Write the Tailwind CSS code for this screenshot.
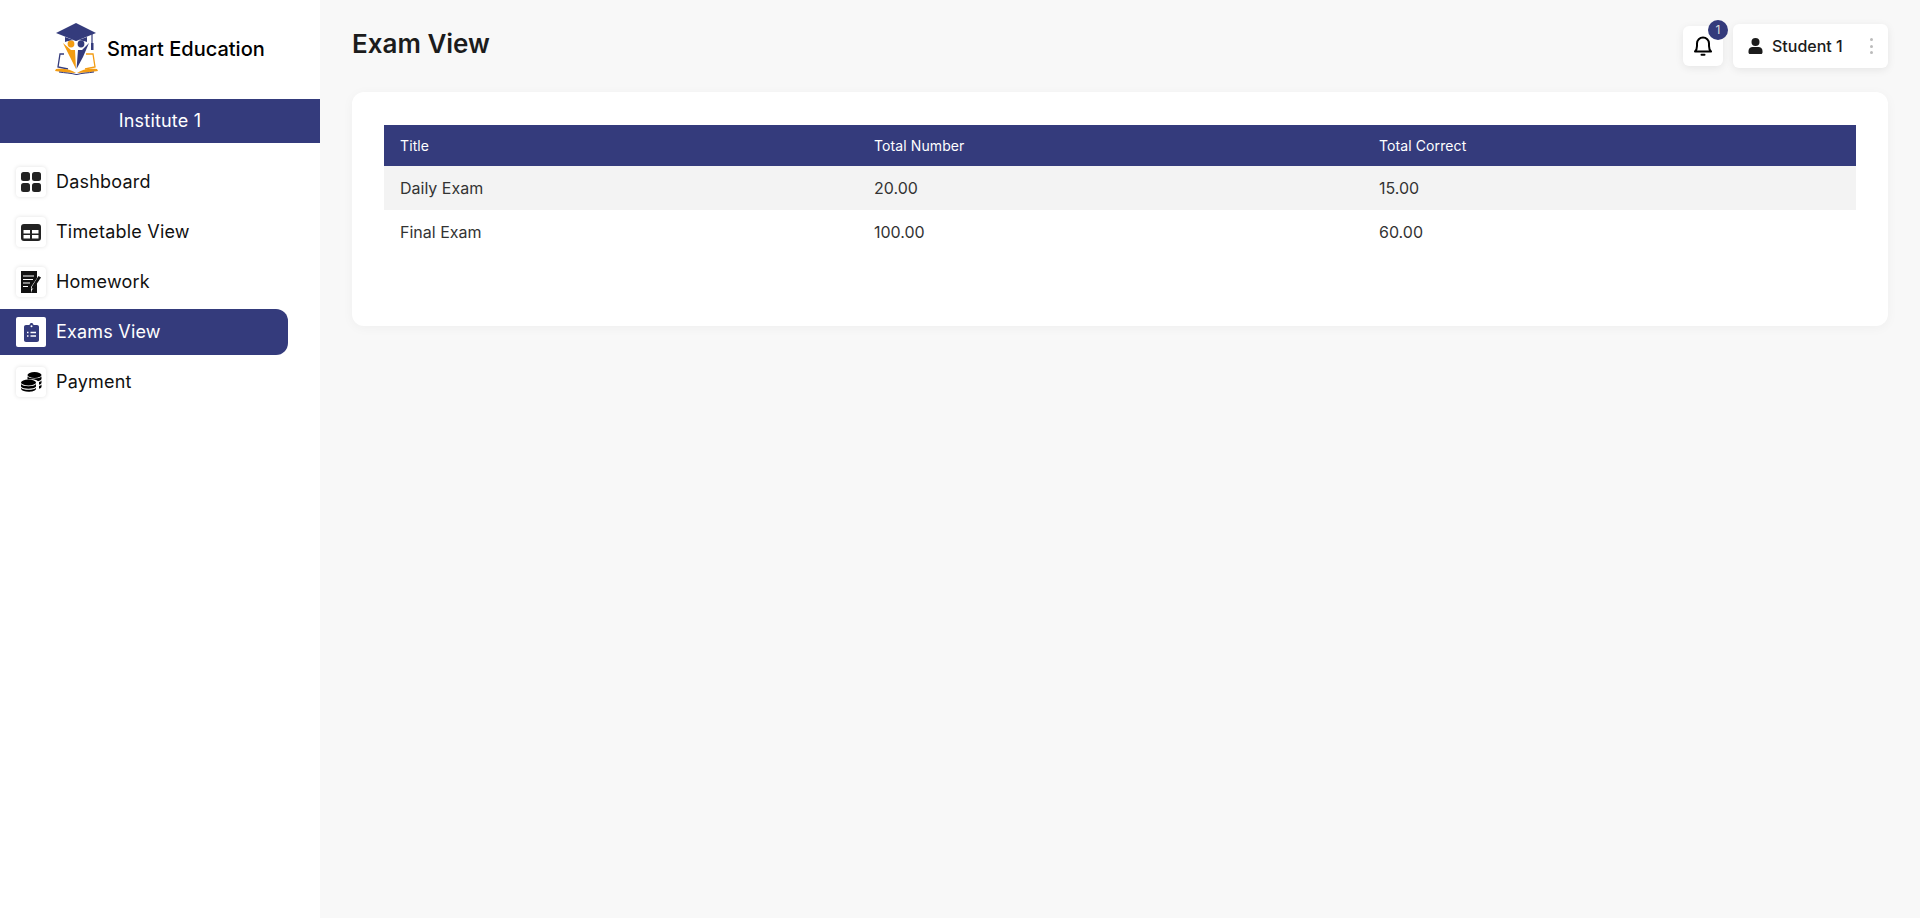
<!DOCTYPE html>
<html lang="en">
<head>
    <meta charset="UTF-8">
    <meta name="viewport" content="width=device-width, initial-scale=1.0">
    <title>Smart Education - Exam View</title>
    <script src="https://cdn.jsdelivr.net/npm/@tailwindcss/browser@4"></script>
</head>
<body class="bg-[#f8f8f8] font-['Inter',sans-serif] h-[918px] overflow-hidden">
    <div class="flex h-[918px]">
        <!-- Sidebar -->
        <aside class="w-[320px] shrink-0 bg-white">
            <div class="h-[99px] flex items-center pl-[55px] gap-[8px] pb-[2px]">
                <svg width="44" height="52" viewBox="0 0 44 52" class="shrink-0">
                    <path d="M21 0L41 10L21 18L1 10Z" fill="#343b7c"/>
                    <path d="M10 14L21 18L32 14V19C27 16.5 15 16.5 10 19Z" fill="#343b7c"/>
                    <path d="M37 11V20" stroke="#343b7c" stroke-width="1.2"/>
                    <rect x="36" y="20" width="2.5" height="7" fill="#343b7c"/>
                    <circle cx="16" cy="21" r="3.4" fill="#f39c12"/>
                    <circle cx="26" cy="21" r="3.4" fill="#343b7c"/>
                    <path d="M8 20L16 27L20 27L21 46L15 34Z" fill="#f39c12"/>
                    <path d="M34 20L27 27L23 27L21.5 46L28 34Z" fill="#343b7c"/>
                    <path d="M9 31H5L3 44L13 46" fill="none" stroke="#343b7c" stroke-width="1.3"/>
                    <path d="M31 31H38L40 44L30 46" fill="none" stroke="#f39c12" stroke-width="1.3"/>
                    <path d="M1 46C8 45 16 46 21 50C15 50 7 49 0 48Z" fill="#f39c12"/>
                    <path d="M42 46C35 45 27 46 22 50C28 50 36 49 43 48Z" fill="#f39c12"/>
                    <path d="M4 49C10 50 16 50 21 51.5H22C27 50 33 50 39 49" fill="none" stroke="#343b7c" stroke-width="1"/>
                </svg>
                <span class="text-[20px] font-[450] text-black leading-none">Smart Education</span>
            </div>
            <div class="h-[44px] bg-[#343b7c] flex items-center justify-center text-white text-[18px] font-normal tracking-[0.2px] pb-[1px]">Institute 1</div>

            <nav class="pt-[24px] pr-[32px] text-[18px] font-normal tracking-[0.2px] leading-[28px]">
                <a class="h-[30px] mb-[20px] pl-[16px] flex items-center gap-[10px] text-[#111]">
                    <span class="w-[30px] h-[30px] rounded-[4px] bg-white shadow-[0_0_4px_rgba(0,0,0,0.12)] flex items-center justify-center">
                        <svg width="20" height="20" viewBox="0 0 20 20" fill="#222">
                            <rect x="0" y="0" width="9" height="9" rx="2.5"/><rect x="11" y="0" width="9" height="9" rx="2.5"/>
                            <rect x="0" y="11" width="9" height="9" rx="2.5"/><rect x="11" y="11" width="9" height="9" rx="2.5"/>
                        </svg>
                    </span>
                    <span class="-mt-[1px]">Dashboard</span>
                </a>
                <a class="h-[30px] mb-[20px] pl-[16px] flex items-center gap-[10px] text-[#111]">
                    <span class="w-[30px] h-[30px] rounded-[4px] bg-white shadow-[0_0_4px_rgba(0,0,0,0.12)] flex items-center justify-center">
                        <svg width="20" height="17" viewBox="0 0 20 17">
                            <rect width="20" height="17" rx="3" fill="#222"/>
                            <rect x="2.5" y="6" width="6.5" height="3.5" fill="#fff"/><rect x="11" y="6" width="6.5" height="3.5" fill="#fff"/>
                            <rect x="2.5" y="11" width="6.5" height="3.5" fill="#fff"/><rect x="11" y="11" width="6.5" height="3.5" fill="#fff"/>
                        </svg>
                    </span>
                    <span class="-mt-[1px]">Timetable View</span>
                </a>
                <a class="h-[30px] mb-[12px] pl-[16px] flex items-center gap-[10px] text-[#111]">
                    <span class="w-[30px] h-[30px] rounded-[4px] bg-white shadow-[0_0_4px_rgba(0,0,0,0.12)] flex items-center justify-center">
                        <svg width="20" height="24" viewBox="0 0 20 24">
                            <path d="M0 1H16V8L10 17V23H0Z" fill="#111"/>
                            <path d="M10 23H16V13L11 20Z" fill="#111"/>
                            <path d="M2 6H13M2 9.5H12M2 13H9M2 16.5H7" stroke="#fff" stroke-width="1.2"/>
                            <path d="M17.5 6L20 7.5L13 18L10.5 19L11 16.5Z" fill="#111"/>
                        </svg>
                    </span>
                    <span class="-mt-[1px]">Homework</span>
                </a>
                <a class="h-[46px] mb-[12px] pl-[16px] flex items-center gap-[10px] bg-[#343b7c] rounded-r-[12px] text-white">
                    <span class="w-[30px] h-[30px] rounded-[2px] bg-white flex items-center justify-center">
                        <svg width="15" height="19" viewBox="0 0 15 19">
                            <path d="M2 2H5.5C5.8 0.5 6.6 0 7.5 0C8.4 0 9.2 0.5 9.5 2H13C14.2 2 15 2.8 15 4V17C15 18.2 14.2 19 13 19H2C0.8 19 0 18.2 0 17V4C0 2.8 0.8 2 2 2Z" fill="#343b7c"/>
                            <circle cx="7.5" cy="3.2" r="1" fill="#fff"/>
                            <path d="M3 9.5H4.5M6.5 9.5H12M3 13H4.5M6.5 13H12" stroke="#fff" stroke-width="1.3"/>
                        </svg>
                    </span>
                    <span class="-mt-[1px]">Exams View</span>
                </a>
                <a class="h-[30px] pl-[16px] flex items-center gap-[10px] text-[#111]">
                    <span class="w-[30px] h-[30px] rounded-[4px] bg-white shadow-[0_0_4px_rgba(0,0,0,0.12)] flex items-center justify-center">
                        <svg width="21" height="20" viewBox="0 0 21 20" fill="#000">
                            <ellipse cx="13.5" cy="3" rx="7" ry="3"/>
                            <path d="M6.5 4.5C8 7 19 7 20.5 4.5V7C20 8.5 18 9 17 9.2C15 7.5 11 7 6.5 7.5Z"/>
                            <path d="M18 10C19 9.8 20 9.4 20.5 8.5V11C20 12 19 12.5 18 12.7Z"/>
                            <path d="M18 14C19 13.8 20 13.4 20.5 12.5V15C20 16 19 16.5 18 16.7Z"/>
                            <ellipse cx="7.5" cy="10.5" rx="7.5" ry="3"/>
                            <path d="M0 12C1.5 15 13.5 15 15 12V14.5C13.5 17.5 1.5 17.5 0 14.5Z" />
                            <path d="M0 15.8C1.5 18.5 13.5 18.5 15 15.8V17C13.5 20.7 1.5 20.7 0 17Z"/>
                        </svg>
                    </span>
                    <span class="-mt-[1px]">Payment</span>
                </a>
            </nav>
        </aside>

        <!-- Main -->
        <main class="flex-1 px-[32px]">
            <header class="h-[92px] flex items-start justify-between">
                <h1 class="mt-[26px] text-[26px] leading-[36px] font-semibold text-[#1c1c1c]">Exam View</h1>
                <div class="mt-[24px] flex items-start gap-[10px]">
                    <div class="relative mt-[2px] w-[40px] h-[40px] rounded-[6px] bg-white shadow-[0_2px_8px_rgba(0,0,0,0.08)] flex items-center justify-center">
                        <svg width="18" height="20" viewBox="0 0 18 20" fill="none" stroke="#000" stroke-width="2" stroke-linejoin="round" stroke-linecap="round">
                            <path d="M1 15.5C2.5 14 3 12.5 3 10V7.5C3 4 5.7 1.5 9 1.5C12.3 1.5 15 4 15 7.5V10C15 12.5 15.5 14 17 15.5Z"/>
                            <path d="M7.5 18.7H10.5"/>
                        </svg>
                        <span class="absolute -top-[6px] -right-[5px] w-[20px] h-[20px] rounded-full bg-[#343b7c] text-[#ddd] text-[12px] flex items-center justify-center">1</span>
                    </div>
                    <div class="w-[155px] h-[44px] rounded-[6px] bg-white shadow-[0_2px_8px_rgba(0,0,0,0.08)] flex items-center pl-[15px] pr-[15px]">
                        <svg width="15" height="16" viewBox="0 0 14 16" fill="#1c1c1c" class="shrink-0">
                            <circle cx="7" cy="4" r="4"/>
                            <path d="M0 13C0 10.5 2 9 4 9H10C12 9 14 10.5 14 13V14.5C14 15.4 13.4 16 12.5 16H1.5C0.6 16 0 15.4 0 14.5Z"/>
                        </svg>
                        <span class="ml-[9px] text-[16px] font-medium text-[#1c1c1c]">Student 1</span>
                        <span class="ml-auto flex flex-col gap-[3.5px]">
                            <i class="block w-[3px] h-[3px] rounded-full bg-[#bbb]"></i>
                            <i class="block w-[3px] h-[3px] rounded-full bg-[#bbb]"></i>
                            <i class="block w-[3px] h-[3px] rounded-full bg-[#bbb]"></i>
                        </span>
                    </div>
                </div>
            </header>

            <section class="h-[234px] rounded-[12px] bg-white shadow-[0_2px_12px_rgba(0,0,0,0.04)] pt-[33px] px-[32px]">
                <table class="w-full table-fixed text-left text-[#333]">
                    <colgroup>
                        <col class="w-[474px]"><col class="w-[505px]"><col>
                    </colgroup>
                    <thead class="bg-[#343b7c] text-white text-[14px]">
                        <tr class="h-[41px]">
                            <th class="px-[16px] font-normal tracking-[0.1px]">Title</th>
                            <th class="px-[16px] font-normal tracking-[0.1px]">Total Number</th>
                            <th class="px-[16px] font-normal tracking-[0.1px]">Total Correct</th>
                        </tr>
                    </thead>
                    <tbody class="text-[16px]">
                        <tr class="h-[44px] bg-[#f3f3f3]">
                            <td class="px-[16px]">Daily Exam</td>
                            <td class="px-[16px]">20.00</td>
                            <td class="px-[16px]">15.00</td>
                        </tr>
                        <tr class="h-[44px]">
                            <td class="px-[16px]">Final Exam</td>
                            <td class="px-[16px]">100.00</td>
                            <td class="px-[16px]">60.00</td>
                        </tr>
                    </tbody>
                </table>
            </section>
        </main>
    </div>
</body>
</html>
